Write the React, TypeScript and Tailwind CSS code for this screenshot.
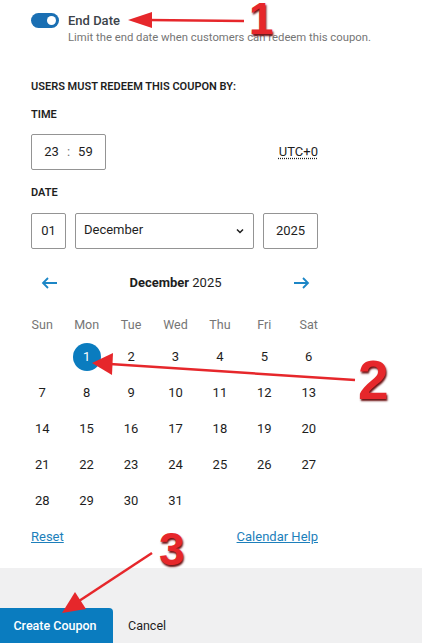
import React from "react";

const weekDays = ["Sun", "Mon", "Tue", "Wed", "Thu", "Fri", "Sat"];

const weeks: (number | null)[][] = [
  [null, 1, 2, 3, 4, 5, 6],
  [7, 8, 9, 10, 11, 12, 13],
  [14, 15, 16, 17, 18, 19, 20],
  [21, 22, 23, 24, 25, 26, 27],
  [28, 29, 30, 31, null, null, null],
];

function ArrowLeft() {
  return (
    <svg width="17" height="12" viewBox="0 0 17 12" fill="none">
      <path d="M16 6H2M7 1L2 6l5 5" stroke="#1c86c6" strokeWidth="1.8" />
    </svg>
  );
}

function ArrowRight() {
  return (
    <svg width="17" height="12" viewBox="0 0 17 12" fill="none">
      <path d="M1 6h14M10 1l5 5-5 5" stroke="#1c86c6" strokeWidth="1.8" />
    </svg>
  );
}

function Annotations() {
  const red = "#e6272b";
  return (
    <>
      <svg className="pointer-events-none absolute left-0 top-0" width="422" height="643" viewBox="0 0 422 643">
        <line x1="148" y1="20" x2="244" y2="21" stroke={red} strokeWidth="2.5" />
        <polygon points="128,20 152,12 152,28" fill={red} />
        <line x1="110" y1="364" x2="355" y2="380" stroke={red} strokeWidth="2.5" />
        <polygon points="92,363 113,353 112,375" fill={red} />
        <line x1="152" y1="553" x2="76" y2="603" stroke={red} strokeWidth="2.5" />
        <polygon points="62,613 75,592 86,609" fill={red} />
      </svg>
      <div className="pointer-events-none absolute left-[249px] top-[3px] font-['Liberation_Sans',sans-serif] text-[44px] font-black leading-[32px] text-[#e6272b] [text-shadow:1px_2px_2px_#6b0f10]">
        1
      </div>
      <div className="pointer-events-none absolute left-[358px] top-[353px] font-['Liberation_Sans',sans-serif] text-[55px] font-black leading-none text-[#e6272b] [text-shadow:1px_2px_2px_#6b0f10]">
        2
      </div>
      <div className="pointer-events-none absolute left-[159px] top-[526px] font-['Liberation_Sans',sans-serif] text-[46px] font-black leading-none text-[#e6272b] [text-shadow:1px_2px_2px_#6b0f10]">
        3
      </div>
    </>
  );
}

export default function App() {
  return (
    <div className="relative h-[643px] w-[422px] overflow-hidden bg-white font-['Roboto',sans-serif] text-[#1e1e1e]">
      <div className="pl-[31px] pr-[104px]">
        <div className="mt-[13px] flex items-start gap-[9px]">
          <div className="flex h-[15px] w-[28px] shrink-0 items-center justify-end rounded-full bg-[#1a6fb3] pr-[3px]">
            <div className="h-[9px] w-[9px] rounded-full bg-white" />
          </div>
          <div>
            <p className="text-[13px] font-medium leading-[15px] text-[#3c434a]">End Date</p>
            <p className="mt-[3px] whitespace-nowrap text-[11.3px] leading-[14px] text-[#757575]">
              Limit the end date when customers can redeem this coupon.
            </p>
          </div>
        </div>

        <h3 className="mt-[35px] text-[11px] font-semibold uppercase leading-[14px]">Users must redeem this coupon by:</h3>

        <p className="mt-[14px] text-[11px] font-semibold uppercase leading-[14px]">Time</p>
        <div className="mt-[12px] flex items-center justify-between">
          <div className="flex h-[36px] w-[75px] items-center justify-center gap-[8px] rounded-[2px] border border-[#949494] text-[13px]">
            <span>23</span>
            <span className="text-[#757575]">:</span>
            <span>59</span>
          </div>
          <span className="text-[13px] underline decoration-dotted underline-offset-2">UTC+0</span>
        </div>

        <p className="mt-[16px] text-[11px] font-semibold uppercase leading-[14px]">Date</p>
        <div className="mt-[13px] flex h-[36px] gap-[9px] text-[13px]">
          <div className="flex w-[35px] items-center justify-center rounded-[2px] border border-[#949494]">01</div>
          <div className="flex w-[179px] items-center justify-between rounded-[2px] border border-[#949494] pl-[8px] pr-[8px]">
            <span className="-mt-[2px]">December</span>
            <svg width="10" height="10" viewBox="0 0 10 10" fill="none">
              <path d="M2 3.5l3 3 3-3" stroke="#1e1e1e" strokeWidth="1.5" />
            </svg>
          </div>
          <div className="flex w-[55px] items-center justify-center rounded-[2px] border border-[#949494]">2025</div>
        </div>

        <div className="-ml-[11px] w-[311px]">
          <div className="mt-[22px] flex h-[24px] items-center justify-between px-[21px]">
            <ArrowLeft />
            <span className="text-[13px]">
              <strong className="font-bold">December</strong> 2025
            </span>
            <ArrowRight />
          </div>

          <div className="mt-[20px] grid h-[20px] grid-cols-7 items-center text-center text-[12.5px] text-[#757575]">
            {weekDays.map((d) => (
              <span key={d}>{d}</span>
            ))}
          </div>

          <div className="mt-[4px]">
            {weeks.map((week, wi) => (
              <div key={wi} className="grid h-[36px] grid-cols-7 items-center text-center text-[13px]">
                {week.map((day, di) => (
                  <div key={di} className="flex justify-center">
                    {day === 1 ? (
                      <span className="flex h-[28px] w-[28px] items-center justify-center rounded-full bg-[#0a7cbf] text-white">
                        1
                      </span>
                    ) : (
                      <span>{day ?? ""}</span>
                    )}
                  </div>
                ))}
              </div>
            ))}
          </div>
        </div>

        <div className="mt-[10px] flex justify-between text-[13px] leading-[16px] text-[#1d7fbb]">
          <a className="underline">Reset</a>
          <a className="underline">Calendar Help</a>
        </div>
      </div>

      <div className="mt-[23px] flex h-[80px] items-start gap-[15px] bg-[#f0f0f1] pt-[40px]">
        <button className="-ml-[3px] h-[40px] w-[116px] rounded-[4px] bg-[#0a7cbf] pb-[4px] text-[12.5px] font-medium text-white">
          Create Coupon
        </button>
        <button className="h-[36px] text-[12.5px] text-[#1e1e1e]">Cancel</button>
      </div>

      <Annotations />
    </div>
  );
}
